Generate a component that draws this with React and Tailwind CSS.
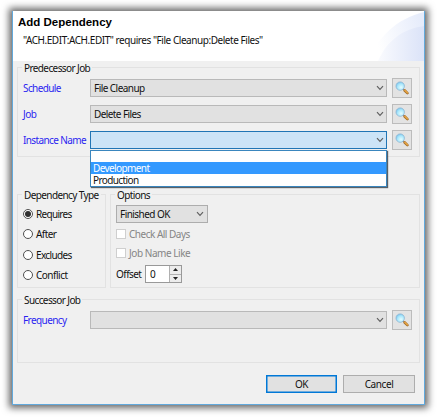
import React, { useId } from 'react';

function Label({ children, className = '' }) {
  return <span className={`block whitespace-nowrap text-[10px] leading-[12px] ${className}`}>{children}</span>;
}

function Chevron({ className = '' }) {
  return (
    <svg className={`h-[6px] w-[8px] shrink-0 ${className}`} viewBox="0 0 8 6" fill="none">
      <path d="M1 1.2 L4 4.3 L7 1.2" stroke="#606060" strokeWidth="1.2" />
    </svg>
  );
}

function Magnifier() {
  const id = useId();
  return (
    <svg className="h-[14px] w-[14px]" viewBox="0 0 14 14" fill="none">
      <defs>
        <radialGradient id={id} cx="0.6" cy="0.65" r="0.7">
          <stop offset="0" stopColor="#e4fdff" />
          <stop offset="0.6" stopColor="#a8e6fb" />
          <stop offset="1" stopColor="#6fc0ee" />
        </radialGradient>
      </defs>
      <path d="M8.2 8 L9.8 9.4" stroke="#8d8d93" strokeWidth="1.4" />
      <path d="M9.7 9.5 L12.4 12.2" stroke="#a5712f" strokeWidth="2.6" strokeLinecap="round" />
      <path d="M9.8 9.2 L12.4 11.8" stroke="#e9a642" strokeWidth="1.3" strokeLinecap="round" />
      <circle cx="5.2" cy="5.1" r="4.2" fill={`url(#${id})`} stroke="#8db5d2" strokeWidth="0.8" />
    </svg>
  );
}

function Combo({ value, tracking = '', active = false, children }) {
  return (
    <div
      className={`relative flex h-[18px] w-[297px] items-center justify-between border pr-[2px] pl-[3px] ${
        active ? 'border-[#2175b5] bg-[#cce4f7]' : 'border-[#b9b9b9] bg-[#e1e1e1]'
      }`}
    >
      <Label className={tracking}>{value}</Label>
      <Chevron />
      {children}
    </div>
  );
}

function FieldRow({ label, labelTracking, children }) {
  return (
    <div className="flex h-[20px] items-center">
      <div className="w-[67px] shrink-0 text-[#2a1ff0]">
        <Label className={labelTracking}>{label}</Label>
      </div>
      {children}
      <button className="ml-[5px] flex h-[20px] w-[20px] items-center justify-center border border-[#bcbcbc] bg-[#e3e3e3]">
        <Magnifier />
      </button>
    </div>
  );
}

function Group({ title, tracking, className = '', children }) {
  return (
    <section className={`border border-[#e2e2e2] ${className}`}>
      <div className="-mt-[7px] ml-[4px] h-[14px] w-fit bg-[#f0f0f0] px-[2px] pt-px">
        <Label className={tracking}>{title}</Label>
      </div>
      {children}
    </section>
  );
}

function Radio({ label, tracking, checked }) {
  return (
    <div className="flex h-[14px] items-center gap-[3px]">
      <span className="flex h-[10px] w-[10px] items-center justify-center rounded-full border border-[#505050] bg-white">
        {checked && <span className="h-[6px] w-[6px] rounded-full bg-[#303030]" />}
      </span>
      <Label className={tracking}>{label}</Label>
    </div>
  );
}

function Check({ label, tracking }) {
  return (
    <div className="flex h-[14px] items-center gap-[3px] text-[#858585]">
      <span className="h-[10px] w-[10px] border border-[#cfcfcf] bg-white" />
      <Label className={tracking}>{label}</Label>
    </div>
  );
}

export default function App() {
  return (
    <div className="h-[417px] w-[437px] overflow-hidden bg-white pt-[11px] pl-[12px] font-['Noto_Sans','Open_Sans',sans-serif] text-[#111111]">
      <main className="flex h-[394px] w-[413px] flex-col border-x border-b border-[#62a9dc] bg-[#f0f0f0] shadow-[0_0_7px_3px_rgba(0,0,0,0.6)]">
        <header className="relative h-[50px] shrink-0 bg-white">
          <svg className="absolute top-0 right-0 h-[50px] w-[56px]" viewBox="0 0 56 50">
            <defs>
              <linearGradient id="swooshBack" x1="0" y1="0.6" x2="1" y2="0.4">
                <stop offset="0.15" stopColor="#ffffff" />
                <stop offset="1" stopColor="#e6ecfb" />
              </linearGradient>
              <linearGradient id="swooshFront" x1="0" y1="0.5" x2="1" y2="0.5">
                <stop offset="0" stopColor="#fafbfe" />
                <stop offset="1" stopColor="#dbe3f8" />
              </linearGradient>
            </defs>
            <path d="M0 50 C10 27 27 8 56 1 L56 50 Z" fill="url(#swooshBack)" />
            <path d="M10 50 C19 30 34 18 56 15 L56 50 Z" fill="url(#swooshFront)" />
          </svg>
          <h1 className="relative pt-[3px] pl-[5px] font-['Liberation_Sans',Arial,sans-serif] text-[11.5px] leading-[16px] font-bold text-black">
            Add Dependency
          </h1>
          <div className="relative pt-[4px] pl-[10px]">
            <Label className="tracking-[-0.45px]">"ACH.EDIT:ACH.EDIT" requires "File Cleanup:Delete Files"</Label>
          </div>
        </header>

        <div className="flex flex-col pt-[6px] pl-[4px]">
          <Group title="Predecessor Job" tracking="tracking-[-0.6px]" className="h-[90px] w-[403px]">
            <div className="flex flex-col gap-[6px] pt-[3px] pl-[5px]">
              <FieldRow label="Schedule" labelTracking="tracking-[-0.6px]">
                <Combo value="File Cleanup" tracking="tracking-[-0.55px]" />
              </FieldRow>
              <FieldRow label="Job" labelTracking="tracking-[-0.5px]">
                <Combo value="Delete Files" tracking="tracking-[-0.58px]" />
              </FieldRow>
              <FieldRow label="Instance Name" labelTracking="tracking-[-0.62px]">
                <Combo value="" active>
                  <div className="absolute top-[18px] -left-px z-10 h-[37px] w-[297px] border border-[#3a86be] bg-white shadow-[1px_1px_1px_rgba(50,60,70,0.8)]">
                    <div className="h-[11px]" />
                    <div className="h-[12px] bg-[#3399ff] pl-[2px] text-white">
                      <Label className="tracking-[-0.6px]">Development</Label>
                    </div>
                    <div className="h-[12px] pl-[2px]">
                      <Label className="tracking-[-0.6px]">Production</Label>
                    </div>
                  </div>
                </Combo>
              </FieldRow>
            </div>
          </Group>

          <div className="mt-[37px] flex gap-[4px]">
            <Group title="Dependency Type" tracking="tracking-[-0.6px]" className="h-[94px] w-[89px]">
              <div className="flex flex-col gap-[6.5px] pt-[4.5px] pl-[5px]">
                <Radio label="Requires" tracking="tracking-[-0.7px]" checked />
                <Radio label="After" tracking="tracking-[-0.6px]" />
                <Radio label="Excludes" tracking="tracking-[-0.65px]" />
                <Radio label="Conflict" tracking="tracking-[-0.5px]" />
              </div>
            </Group>
            <Group title="Options" tracking="tracking-[-0.6px]" className="h-[94px] w-[310px]">
              <div className="flex flex-col pt-[3px] pl-[5px]">
                <div className="flex h-[18px] w-[92px] items-center justify-between border border-[#adadad] bg-[#e1e1e1] px-[3px]">
                  <Label className="tracking-[-0.55px]">Finished OK</Label>
                  <Chevron />
                </div>
                <div className="mt-[4px] flex flex-col gap-[5px]">
                  <Check label="Check All Days" tracking="tracking-[-0.5px]" />
                  <Check label="Job Name Like" tracking="tracking-[-0.45px]" />
                </div>
                <div className="mt-[5px] flex h-[18px] items-center">
                  <div className="w-[29px]">
                    <Label className="tracking-[-0.55px]">Offset</Label>
                  </div>
                  <div className="flex h-[18px] w-[37px] items-center justify-between border border-[#999999] bg-white pl-[4px]">
                    <Label>0</Label>
                    <div className="flex h-full w-[12px] flex-col border-l border-[#b0b0b0] bg-[#ececec]">
                      <span className="flex flex-1 items-center justify-center border-b border-[#b0b0b0]">
                        <svg className="h-[3px] w-[5px]" viewBox="0 0 5 3"><path d="M0 3 L2.5 0 L5 3 Z" fill="#222" /></svg>
                      </span>
                      <span className="flex flex-1 items-center justify-center">
                        <svg className="h-[3px] w-[5px]" viewBox="0 0 5 3"><path d="M0 0 L2.5 3 L5 0 Z" fill="#222" /></svg>
                      </span>
                    </div>
                  </div>
                </div>
              </div>
            </Group>
          </div>

          <Group title="Successor Job" tracking="tracking-[-0.6px]" className="mt-[11px] h-[64px] w-[403px]">
            <div className="pt-[3px] pl-[5px]">
              <FieldRow label="Frequency" labelTracking="tracking-[-0.58px]">
                <Combo value="" />
              </FieldRow>
            </div>
          </Group>
        </div>

        <footer className="mt-[12px] flex justify-end gap-[6px] pr-[9px]">
          <button className="flex h-[18px] w-[71px] items-center justify-center bg-[#e1e1e1] shadow-[inset_0_0_0_1.5px_#0078d7]">
            <Label className="tracking-[-0.5px]">OK</Label>
          </button>
          <button className="flex h-[18px] w-[72px] items-center justify-center border border-[#adadad] bg-[#e1e1e1]">
            <Label className="tracking-[-0.4px]">Cancel</Label>
          </button>
        </footer>
      </main>
    </div>
  );
}
